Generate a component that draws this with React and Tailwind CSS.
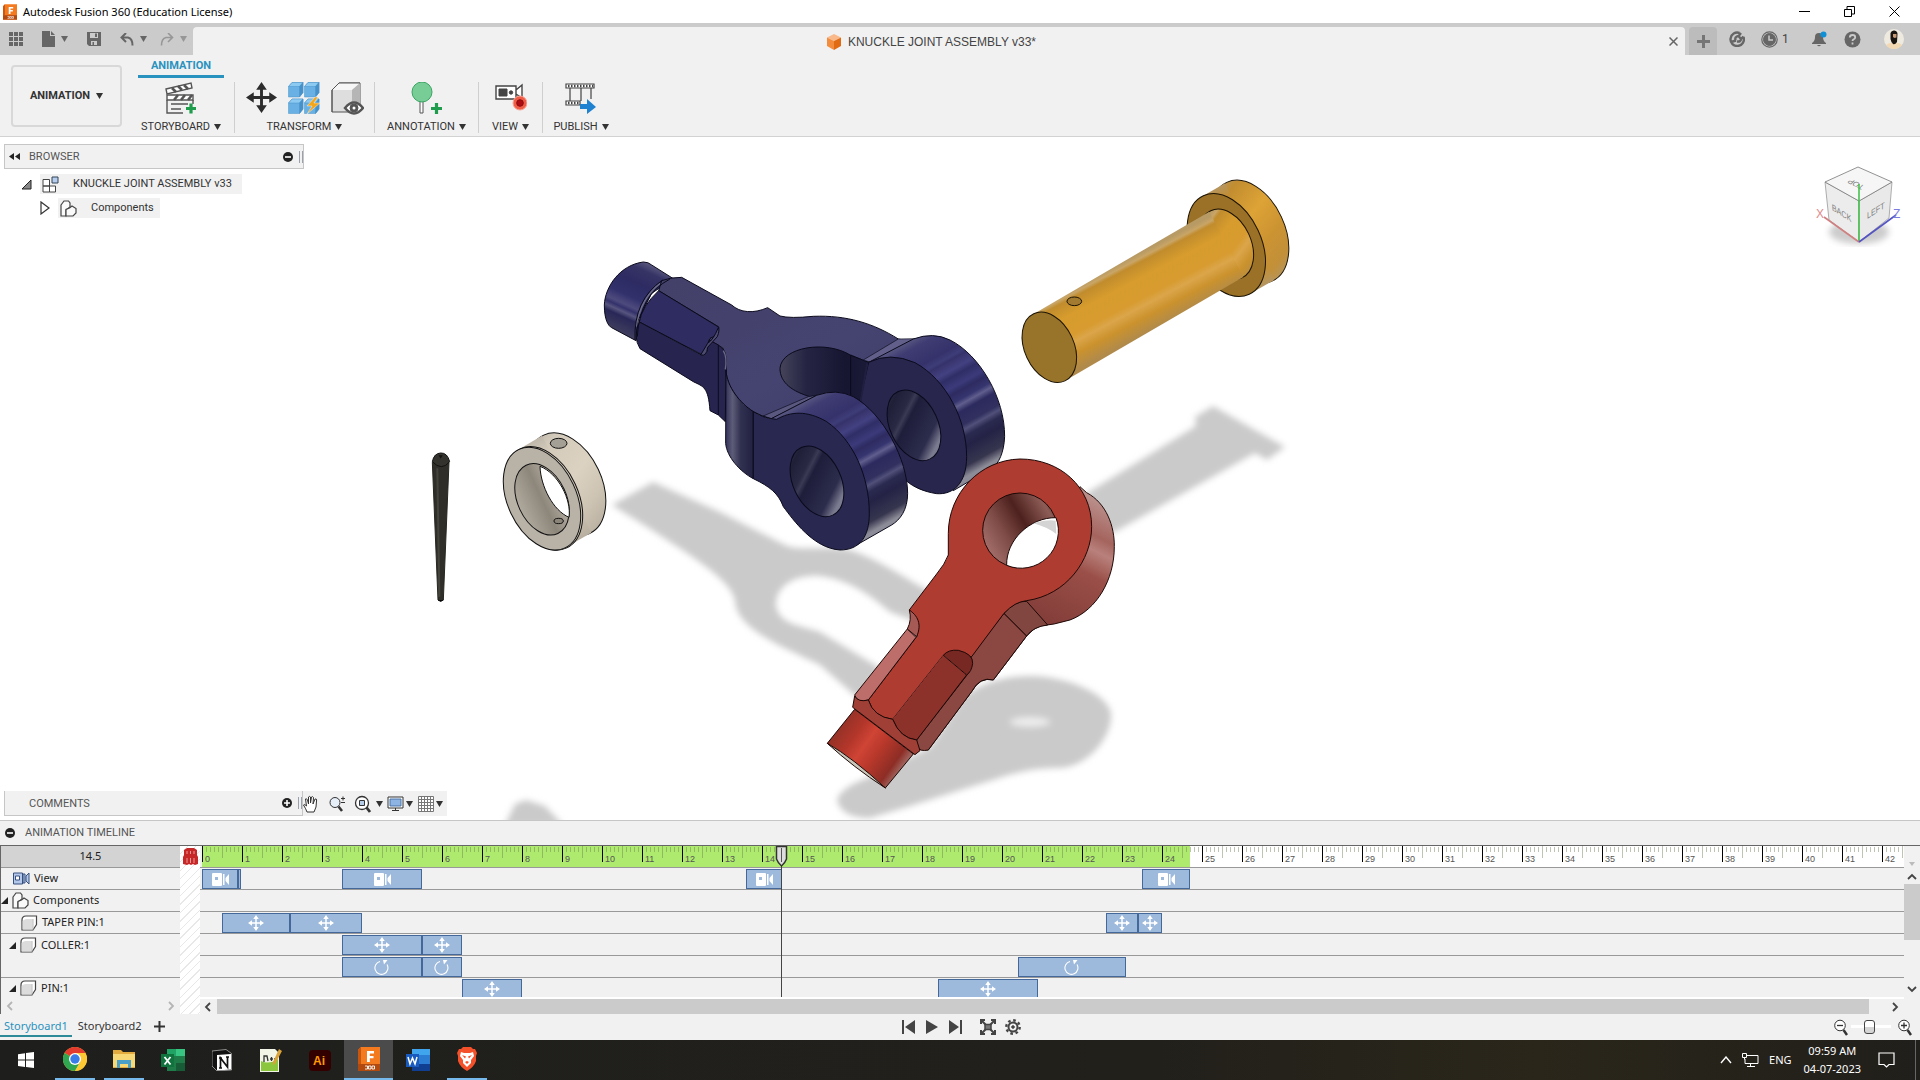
import { useState } from 'react';

const UNIT = 40;

const rows = [
    { id: 'view', clips: [[0, 0.9, 'camera'], [0.9, 0.98, ''], [3.5, 5.5, 'camera'], [13.6, 14.5, 'camera'], [23.5, 24.7, 'camera']] },
    { id: 'components', clips: [] },
    { id: 'taper', clips: [[0.5, 2.2, 'move'], [2.2, 4, 'move'], [22.6, 23.4, 'move'], [23.4, 24, 'move']] },
    { id: 'coller-move', clips: [[3.5, 5.5, 'move'], [5.5, 6.5, 'move']] },
    { id: 'coller-turn', clips: [[3.5, 5.5, 'turn'], [5.5, 6.5, 'turn'], [20.4, 23.1, 'turn']] },
    { id: 'pin', clips: [[6.5, 8, 'move'], [18.4, 20.9, 'move']] },
];

const Caret = () => (
    <svg width="7" height="6" viewBox="0 0 7 6" fill="currentColor" className="shrink-0"><path d="M0 0h7L3.500 6z" /></svg>
);

const MoveIcon = ({ size = 16, fill = '#fff' }) => (
    <svg width={size} height={size} viewBox="0 0 32 32" fill={fill}>
        <path d="M16 0l5.500 8h-4v6.500H24v-4l8 5.500-8 5.500v-4h-6.500V24h4L16 32l-5.500-8h4v-6.500H8v4L0 16l8-5.500v4h6.500V8h-4z" />
    </svg>
);

const CameraIcon = () => (
    <svg width="17" height="13" viewBox="0 0 17 13" fill="#fff">
        <path fillRule="evenodd" d="M1 0h8a1 1 0 0 1 1 1v11a1 1 0 0 1-1 1H1a1 1 0 0 1-1-1V1a1 1 0 0 1 1-1zM3 4v3h3V4z" />
        <path d="M11 1h1.500v11H11zM17 1v11l-3.500-4V5z" />
    </svg>
);

const TurnIcon = () => (
    <svg width="16" height="17" viewBox="0 0 16 17" fill="none" stroke="#fff">
        <path d="M6 2.500A6.500 6.500 0 1 0 13 5.500" strokeWidth="1.100" />
        <path d="M9 1h4.500L10 5.500z" fill="#fff" stroke="none" />
    </svg>
);

const ComponentsIcon = () => (
    <svg width="17" height="17" viewBox="0 0 17 17" fill="#fafafa" stroke="#444" strokeWidth="1.200" className="shrink-0">
        <path d="M1 5l3-4h4.500L10 3v4l-4 3v6H1z" />
        <path d="M6 16V9.500L9.500 8 12 6l4 2.500V13l-3 3z" />
    </svg>
);

const BodyIcon = () => (
    <svg width="17" height="16" viewBox="0 0 17 16" stroke="#444" strokeWidth="1.200" className="shrink-0">
        <path d="M1 5q0-4 4-4h10.500v8.500L12 15H1z" fill="#fff" />
        <path d="M1.600 6q2-2 4-2h6v10.400h-10z" fill="#dcdcdc" stroke="none" />
        <path d="M12 15V4" fill="none" stroke="#aaa" strokeWidth="0.800" />
    </svg>
);

const Expanded = () => (
    <svg width="7" height="7" viewBox="0 0 7 7" fill="#222" className="shrink-0"><path d="M7 0v7H0z" /></svg>
);

const RoundIcon = ({ plus }) => (
    <svg width="10" height="10" viewBox="0 0 10 10" className="shrink-0">
        <circle cx="5" cy="5" r="5" fill="#222" />
        <path d={plus ? 'M2 5h6M5 2v6' : 'M2 5h6'} stroke="#fff" strokeWidth="1.600" />
    </svg>
);

const Grip = () => <span className="h-3 w-1 shrink-0 border-x border-gray-400"></span>;

const FusionIcon = ({ w, h }) => (
    <svg width={w} height={h} viewBox="0 0 22 24">
        <path d="M3 0h19v24H0V3z" fill="#f47a20" />
        <path d="M0 3l3-3v17H0z" fill="#c9560e" />
        <path d="M0 17h22v7H0z" fill="#b24a10" />
        <path d="M9 4h7v2.400h-4.200V9h3.700v2.300h-3.700V15H9z" fill="#fff" />
        <path d="M7 19h2.500v3H7M10.500 19H13v3h-2.500zM14 19h2.500v3H14z" fill="none" stroke="#fff" strokeWidth="0.900" />
    </svg>
);

const TitleBar = () => (
    <header className="flex h-[23px] shrink-0 items-center bg-white pl-[3px] font-['Noto_Sans',sans-serif] text-[11px] text-black">
        <FusionIcon w="14" h="16" />
        <h1 className="ml-1.5 pt-px">Autodesk Fusion 360 (Education License)</h1>
        <div className="ml-auto mr-5 flex gap-[34px]">
            <button aria-label="Minimize">
                <svg width="11" height="11" viewBox="0 0 11 11" stroke="#000"><path d="M0 5.500h11" /></svg>
            </button>
            <button aria-label="Restore">
                <svg width="11" height="11" viewBox="0 0 11 11" stroke="#000" fill="none"><path d="M.5 3.500h7v7h-7zM3 3V.5h7.500V8H8" /></svg>
            </button>
            <button aria-label="Close">
                <svg width="11" height="11" viewBox="0 0 11 11" stroke="#000"><path d="M.5.5l10 10M10.500.5l-10 10" /></svg>
            </button>
        </div>
    </header>
);

const TabStrip = () => (
    <div className="flex h-8 shrink-0 bg-[#cbcbcb] text-[#666]">
        <div className="flex w-[193px] shrink-0 items-center pl-[9px]">
            <button aria-label="Show data panel">
                <svg width="14" height="14" viewBox="0 0 14 14" fill="#666"><path d="M0 0h4v4H0zM5 0h4v4H5zM10 0h4v4h-4zM0 5h4v4H0zM5 5h4v4H5zM10 5h4v4h-4zM0 10h4v4H0zM5 10h4v4H5zM10 10h4v4h-4z" /></svg>
            </button>
            <button aria-label="File" className="ml-[19px] flex items-center gap-1.5">
                <svg width="13" height="16" viewBox="0 0 13 16" fill="#666"><path d="M0 0h8v5h5v11H0zM9 0l4 4H9z" /></svg>
                <Caret />
            </button>
            <button aria-label="Save" className="ml-[19px]">
                <svg width="14" height="14" viewBox="0 0 14 14" fill="#666"><path fillRule="evenodd" d="M0 0h14v14H2l-2-2zM3 1v5h8V1zM4 9v4h1.500v-3H7v3h3V9zM8 1.500h2v3.500H8z" /></svg>
            </button>
            <button aria-label="Undo" className="ml-[19px] flex items-center gap-1.5">
                <svg width="14" height="13" viewBox="0 0 14 13" fill="none" stroke="#666" strokeWidth="2"><path d="M6 0L1.500 4.500 6 9M2 4.500h6q4.500 1 4.500 8" /></svg>
                <Caret />
            </button>
            <button aria-label="Redo" className="ml-[13px] flex items-center gap-1.5 text-[#979797]">
                <svg width="14" height="13" viewBox="0 0 14 13" fill="none" stroke="#979797" strokeWidth="1.600"><path d="M8 0l4.500 4.500L8 9M12 4.500H6Q1.500 5.500 1.500 12.500" /></svg>
                <Caret />
            </button>
        </div>
        <div className="mt-1 flex flex-1 items-center rounded-t bg-[#f1f1f1]">
            <div className="flex flex-1 items-center justify-center gap-1.5 pt-px font-['Liberation_Sans',sans-serif] text-xs text-[#444]">
                <svg width="16" height="16" viewBox="0 0 16 16">
                    <path d="M8 0l7 3.500-7 3.500-7-3.500z" fill="#f9b98b" />
                    <path d="M1 3.500L8 7v9l-7-4z" fill="#f48c3d" />
                    <path d="M15 3.500L8 7v9l7-4z" fill="#e06b12" />
                </svg>
                KNUCKLE JOINT ASSEMBLY v33*
            </div>
            <button aria-label="Close tab" className="mr-[7px]">
                <svg width="9" height="9" viewBox="0 0 9 9" stroke="#666" strokeWidth="1.500"><path d="M.5.5l8 8M8.500.5l-8 8" /></svg>
            </button>
        </div>
        <button aria-label="New tab" className="ml-1 mt-1 flex w-7 items-center justify-center rounded-t bg-[#bcbcbc]">
            <svg width="13" height="13" viewBox="0 0 13 13" stroke="#757575" strokeWidth="3"><path d="M0 6.500h13M6.500 0v13" /></svg>
        </button>
        <div className="flex w-[203px] items-center pl-3">
            <button aria-label="Extensions">
                <svg width="16" height="16" viewBox="0 0 16 16" fill="none" stroke="#666" strokeWidth="2.400"><path d="M10.500 2A6.700 6.700 0 1 0 14.500 6M2 11l5-1.500M6.500 9.500q-1-4 3-4.500l2.500 3q0 3-4 2.500M10 4.500L12 2M12 8l2.500-2.500" /></svg>
            </button>
            <button className="ml-4 flex items-center gap-1 font-['Roboto',sans-serif] text-xs text-[#444]">
                <svg width="17" height="17" viewBox="0 0 17 17" fill="none" stroke="#666"><circle cx="8.500" cy="8.500" r="7.700" strokeWidth="1.200" /><circle cx="8.500" cy="8.500" r="6" fill="#666" /><path d="M8 4.500V9h4" stroke="#cbcbcb" strokeWidth="1.500" /></svg>
                1
            </button>
            <button aria-label="Notifications" className="ml-[23px]">
                <svg width="15" height="16" viewBox="0 0 15 16" fill="#666"><path d="M0 12q3-2 3-6 0-4 4-4t4 4q0 4 3 6v1H0zM5 14h4q-2 2.500-4 0z" /><circle cx="11.500" cy="3.500" r="3" fill="#0f8fd6" /></svg>
            </button>
            <button aria-label="Help" className="ml-[17px]">
                <svg width="17" height="17" viewBox="0 0 17 17"><circle cx="8.500" cy="8.500" r="8" fill="#666" /><path d="M5.800 6.500q0-2.500 2.700-2.500t2.700 2.200q0 1.300-1.500 2.100-1.200.6-1.200 1.700M8.500 11.500v2" fill="none" stroke="#cbcbcb" strokeWidth="1.800" /></svg>
            </button>
            <button aria-label="Account" className="ml-[23px]">
                <svg width="20" height="20" viewBox="0 0 20 20">
                    <circle cx="10" cy="10" r="10" fill="#eeeae0" />
                    <path d="M2 16q4-3 8-2 5-1 8 2-3 4-8 4t-8-4z" fill="#f2d9b4" />
                    <path d="M6.500 4q1-3 4-2.500t3 3.500L13 13q-2 3-4 2-2-2-2.500-5z" fill="#1b1512" />
                    <path d="M9 5h3.500v3.500l-2 .5-1.500-1z" fill="#c99a76" />
                </svg>
            </button>
        </div>
    </div>
);

const ToolGroup = ({ label, className, children }) => (
    <div className={`flex flex-col items-center justify-between border-r border-[#cfcfcf] ${className}`}>
        <div className="flex gap-[11px] text-[#333]">{children}</div>
        <button className="flex items-center gap-1 whitespace-nowrap leading-3">{label} <Caret /></button>
    </div>
);

const Ribbon = () => (
    <section className="relative flex h-[82px] shrink-0 border-b border-[#d2d2d2] bg-[#f1f1f1] font-['Roboto',sans-serif] text-[11px] text-[#333] shadow-[0_2px_2px_#eee]">
        <button className="ml-[11px] mt-2.5 flex h-[62px] w-[111px] items-center justify-center gap-1.5 rounded border-2 border-[#d8d8d8] font-bold">
            ANIMATION <Caret />
        </button>
        <div className="ml-4 flex flex-col">
            <button className="flex h-[23px] w-[86px] items-center justify-center border-b-[3px] border-[#2a92bf] pt-[3px] font-bold text-[#2a92bf]">ANIMATION</button>
            <div className="mt-1 flex h-[51px]">
                <ToolGroup label="STORYBOARD" className="w-[97px] pr-2.5">
                    <svg width="32" height="32" viewBox="0 0 32 32" fill="none" stroke="#555" strokeWidth="1.400">
                        <path d="M1 7L26 1l1 5L2 12z" fill="#fff" /><path d="M7 6l4 4M13 4l4 4M19 3l4 4" strokeWidth="2.600" />
                        <path d="M2 13h26v5H2z" fill="#fff" /><path d="M9 18l4-5M16 18l4-5M23 18l4-5" strokeWidth="2.600" />
                        <path d="M2 18v13h16M28 18v4M6 22h17M6 27h10M2 31h16" />
                        <path d="M21 26.500h10M26 21.500v10" stroke="#1f9d4c" strokeWidth="3.200" />
                    </svg>
                </ToolGroup>
                <ToolGroup label="TRANSFORM" className="w-[140px]">
                    <MoveIcon size={31} fill="#2c2c2c" />
                    <svg width="32" height="32" viewBox="0 0 32 32" stroke="#4a93c8" strokeWidth="0.500">
                        <g id="cube"><path d="M0.500 4.500L4 .5h11v10L11.500 15H.5z" fill="#69b1e4" /><path d="M.5 4.500L4 .5h11l-3.500 4z" fill="#8ccaf2" /><path d="M11.500 4.500L15 .5v10L11.500 15z" fill="#4592cb" /></g>
                        <use href="#cube" x="16" /><use href="#cube" y="16.500" /><use href="#cube" x="16" y="16.500" />
                        <path d="M27 15l-8 9h5l-5 8 13-11h-6l4-6z" fill="#f5a71c" stroke="#f1f1f1" />
                    </svg>
                    <svg width="33" height="33" viewBox="0 0 33 33" stroke="#555">
                        <path d="M1 8l7-7h21v21l-8 8H1z" fill="#dedede" /><path d="M1 8l7-7h21l-8 7z" fill="#f6f6f6" stroke="none" /><path d="M21 8l8-7v21l-8 8z" fill="#b5b5b5" stroke="none" />
                        <path d="M1 30V8l7-7h21" fill="none" />
                        <path d="M14 26q9-11 18 0-9 11-18 0z" fill="#fff" strokeWidth="2.500" stroke="#555" /><circle cx="23" cy="26" r="4" fill="#555" /><circle cx="23" cy="26" r="1.500" fill="#fff" stroke="none" />
                    </svg>
                </ToolGroup>
                <ToolGroup label="ANNOTATION" className="w-[104px]">
                    <svg width="32" height="32" viewBox="0 0 32 32">
                        <path d="M9 19h3v12H9z" fill="#fff" stroke="#555" /><ellipse cx="11" cy="10" rx="10" ry="10" fill="#78cd97" stroke="#3aa564" />
                        <path d="M20 26.500h11M25.500 21v11" stroke="#1f9d4c" strokeWidth="3.200" />
                    </svg>
                </ToolGroup>
                <ToolGroup label="VIEW" className="w-16">
                    <svg width="32" height="32" viewBox="0 0 32 32" fill="none" stroke="#444">
                        <path d="M1 4h20v13H1zM21 8l6-5v13l-6-4" fill="#fff" strokeWidth="1.400" /><path d="M4 7h8v7H4z" fill="#444" /><circle cx="16" cy="10.500" r="1.700" fill="#444" />
                        <circle cx="25" cy="21" r="7" fill="#f05c46" stroke="#f8a497" /><circle cx="25" cy="21" r="3.300" fill="#ad0d12" stroke="#8c0b10" />
                    </svg>
                </ToolGroup>
                <div className="flex w-[76px] flex-col items-center justify-between">
                    <svg width="32" height="32" viewBox="0 0 32 32" fill="none" stroke="#444" strokeWidth="1.200">
                        <path d="M1 2h28v4H1zM1 19h14v4H1zM5 6v13M16 6v13M26 6v11" fill="#fff" />
                        <path d="M3 4h25M3 21h11" strokeWidth="2.500" strokeDasharray="1.500 1.500" />
                        <path d="M15 22h7v-5l9 8-9 7v-5h-7z" fill="#1f82d0" stroke="none" />
                    </svg>
                    <button className="flex items-center gap-1 leading-3">PUBLISH <Caret /></button>
                </div>
            </div>
        </div>
    </section>
);

const Scene = () => (
    <svg className="absolute inset-0 h-full w-full" viewBox="0 137 1920 683" preserveAspectRatio="xMidYMid slice" aria-label="Exploded knuckle joint">
        <defs>
            <filter id="soft"><feGaussianBlur stdDeviation="3" /></filter>
            <linearGradient id="rim1" gradientUnits="userSpaceOnUse" x1="620" y1="480" x2="850" y2="890">
                <stop offset="0" stopColor="#b0b0bd" /><stop offset=".05" stopColor="#5d5b83" /><stop offset=".12" stopColor="#3e3c72" /><stop offset=".24" stopColor="#35326b" /><stop offset=".28" stopColor="#3f3d79" />
                <stop offset=".3" stopColor="#35326a" /><stop offset=".36" stopColor="#444182" /><stop offset=".4" stopColor="#302e66" /><stop offset=".46" stopColor="#3c3a7a" /><stop offset=".5" stopColor="#2d2b60" /><stop offset=".55" stopColor="#37356f" />
                <stop offset=".58" stopColor="#5f5e8d" /><stop offset=".62" stopColor="#2c2a5e" /><stop offset=".7" stopColor="#31305f" /><stop offset=".73" stopColor="#50507a" /><stop offset=".77" stopColor="#2a294f" /><stop offset=".83" stopColor="#242346" /><stop offset=".94" stopColor="#37364f" /><stop offset="1" stopColor="#8c8c98" />
            </linearGradient>
            <linearGradient id="rim2" href="#rim1" gradientTransform="translate(292 -170)" />
            <linearGradient id="shank" gradientUnits="userSpaceOnUse" x1="200" y1="65" x2="105" y2="275">
                <stop offset="0" stopColor="#5d5b80" /><stop offset=".12" stopColor="#363465" /><stop offset=".3" stopColor="#2d2b62" /><stop offset=".5" stopColor="#33316c" /><stop offset=".62" stopColor="#4d4b7d" /><stop offset=".67" stopColor="#33316a" /><stop offset=".72" stopColor="#57557f" /><stop offset=".78" stopColor="#292757" /><stop offset="1" stopColor="#41405e" />
            </linearGradient>
            <linearGradient id="top" x1="0" y1="0" x2="1" y2="1"><stop offset="0" stopColor="#434169" /><stop offset=".6" stopColor="#454370" /><stop offset="1" stopColor="#3e3c68" /></linearGradient>
            <linearGradient id="arm"><stop offset="0" stopColor="#34335a" /><stop offset=".25" stopColor="#5d5c78" /><stop offset=".55" stopColor="#30304f" /><stop offset="1" stopColor="#222143" /></linearGradient>
            <linearGradient id="bore" x1="0" y1="0" x2=".5" y2="1"><stop offset="0" stopColor="#3b3a54" /><stop offset=".2" stopColor="#1f1f38" /><stop offset=".38" stopColor="#292944" /><stop offset=".43" stopColor="#3b3a54" /><stop offset=".5" stopColor="#1e1e3b" /><stop offset=".85" stopColor="#2c2c4c" /><stop offset="1" stopColor="#7b7b90" /></linearGradient>
            <linearGradient id="slot"><stop offset="0" stopColor="#45445a" /><stop offset=".2" stopColor="#252443" /><stop offset=".5" stopColor="#171631" /><stop offset="1" stopColor="#202043" /></linearGradient>
            <linearGradient id="gold" gradientUnits="userSpaceOnUse" x1="362" y1="310" x2="465" y2="506">
                <stop offset="0" stopColor="#b79a64" /><stop offset=".06" stopColor="#c9a566" /><stop offset=".11" stopColor="#c18c2d" /><stop offset=".3" stopColor="#d79c2d" /><stop offset=".55" stopColor="#d79b2f" /><stop offset=".65" stopColor="#dba54a" /><stop offset=".8" stopColor="#cb922d" /><stop offset="1" stopColor="#b08a4b" />
            </linearGradient>
            <linearGradient id="gold2" gradientUnits="userSpaceOnUse" x1="640" y1="85" x2="790" y2="390"><stop offset="0" stopColor="#b59663" /><stop offset=".12" stopColor="#c28d30" /><stop offset=".4" stopColor="#dda336" /><stop offset=".65" stopColor="#cc9332" /><stop offset=".85" stopColor="#c29039" /><stop offset="1" stopColor="#b0976c" /></linearGradient>
            <linearGradient id="redside" gradientUnits="userSpaceOnUse" x1="840" y1="200" x2="640" y2="600"><stop offset="0" stopColor="#bd9591" /><stop offset=".25" stopColor="#a5645e" /><stop offset=".34" stopColor="#b9817c" /><stop offset=".5" stopColor="#9a4f48" /><stop offset="1" stopColor="#7f3a36" /></linearGradient>
            <linearGradient id="redbore" x1="0" y1=".6" x2="1" y2="0"><stop offset="0" stopColor="#a06b66" /><stop offset=".25" stopColor="#7d4a45" /><stop offset=".5" stopColor="#4d211e" /><stop offset=".8" stopColor="#8d5c56" /><stop offset="1" stopColor="#452320" /></linearGradient>
            <linearGradient id="redend" gradientUnits="userSpaceOnUse" x1="50" y1="890" x2="245" y2="1030"><stop offset="0" stopColor="#913127" /><stop offset=".25" stopColor="#b3362a" /><stop offset=".42" stopColor="#cf4435" /><stop offset=".6" stopColor="#b8382b" /><stop offset=".85" stopColor="#8d2d25" /><stop offset="1" stopColor="#a67771" /></linearGradient>
            <linearGradient id="ring" gradientUnits="userSpaceOnUse" x1="330" y1="120" x2="490" y2="425"><stop offset="0" stopColor="#bcb5a8" /><stop offset=".15" stopColor="#d3cabb" /><stop offset=".5" stopColor="#dcd2c1" /><stop offset=".75" stopColor="#cdc4b4" /><stop offset="1" stopColor="#b5ac9d" /></linearGradient>
            <linearGradient id="ringbore"><stop offset="0" stopColor="#b0a99e" /><stop offset=".5" stopColor="#8d867b" /><stop offset="1" stopColor="#c1b9ac" /></linearGradient>
        </defs>

        {/* ground shadows */}
        <g fill="#cacaca" filter="url(#soft)">
            <path d="M612 505L653 482 720 512 785 545C800 552 830 545 850 550 880 560 905 578 930 592L925 625 890 612C870 595 850 580 820 576 790 574 775 590 776 606 780 625 800 625 820 632L880 668 860 700 820 665C790 650 735 630 735 600 730 580 700 560 612 505z" />
            <path d="M1195 417L1213 406 1285 447 1267 460 1255 453 1113 533 1080 515 1087 493 1196 426z" />
            <path d="M837 800C840 790 853 783 870 777L930 747 963 697C980 683 1007 675 1033 676 1067 677 1107 693 1111 713 1113 737 1087 767 1060 768 1033 767 1007 775 993 780L967 788 907 807 870 818C853 818 840 813 837 800z" />
            <path d="M505 825L515 804 526 800 545 806 563 825z" />
            <ellipse cx="1030" cy="722" rx="20" ry="5" fill="#ececec" />
        </g>

        {/* taper pin and collar */}
        <g transform="translate(420 400) scale(.3333)" stroke="#111" strokeWidth="3">
            <path d="M37 187L54 600q8 6 16 0L87 187z" fill="#2f2e29" stroke="#26251f" />
            <path d="M52 205L58 590" stroke="#45443c" strokeWidth="6" fill="none" />
            <path d="M37 185Q42 160 62 159t27 26q-24 30-52 0z" fill="#34322c" />
            <path d="M56 166h12l-6 10z" fill="#111" stroke="none" /><path d="M54 600q8 8 16 0" />
            <ellipse cx="440" cy="253" rx="105" ry="163" transform="rotate(-25 440 253)" fill="url(#ring)" />
            <path d="M293 150L366 107 514 398 441 440z" fill="url(#ring)" stroke="none" />
            <ellipse cx="371" cy="295" rx="104" ry="164" transform="rotate(-25 371 295)" fill="#cfc7b8" />
            <ellipse cx="366" cy="296" rx="103" ry="163" transform="rotate(-25 366 296)" fill="#b8b2a7" />
            <ellipse cx="366" cy="298" rx="73" ry="113" transform="rotate(-25 366 298)" fill="url(#ringbore)" />
            <path d="M360 199C362 260 400 332 447 352 455 300 415 220 360 199z" fill="#fff" />
            <ellipse cx="416" cy="130" rx="25" ry="15" fill="#a5a096" /><ellipse cx="416" cy="363" rx="14" ry="8" fill="#8a8479" />
        </g>

        {/* fork */}
        <g transform="translate(580 240) scale(.3333)" stroke="#0b0a1c" strokeWidth="3" strokeLinejoin="round">
            <path d="M190 66C120 75 75 140 73 195 73 240 85 258 95 263L168 302 175 240 215 160 280 116 215 75Q205 66 190 66z" fill="url(#shank)" />
            <path d="M305 112L455 195C480 218 520 222 563 203L600 228Q630 236 700 229C800 225 880 250 955 297L985 303 860 367Q845 358 812 345L812 465 690 470 575 535Q545 530 520 515C480 490 440 440 438 390L430 325 388 300 415 260 236 152 245 122Q270 112 305 112z" fill="url(#top)" />
            <path d="M236 152L417 262 412 285 390 295 368 345 178 246Q185 200 236 152z" fill="#2e2c60" />
            <path d="M178 246L368 347 380 335 388 300 415 315 430 328Q442 345 438 390L436 545 415 525 390 512C385 440 370 440 340 425L180 326Q158 290 178 246z" fill="#27254f" />
            <path d="M415 263Q400 300 383 310L362 345Q380 350 383 322L412 290Q420 270 415 263z" fill="#4d4b70" />
            <path d="M415 315V525" fill="none" /><path d="M430 332q12 20 6 56" fill="none" stroke="#6b6a86" strokeWidth="4" />
            <path d="M240 130Q182 175 168 260" fill="none" stroke="#6d6d88" strokeWidth="5" /><path d="M248 120Q160 180 165 300M270 117Q178 165 172 290" fill="none" />
            <path d="M600 385C605 320 740 300 812 346L866 367Q900 350 935 350L990 600 940 570 770 460 690 470C640 455 600 430 600 385z" fill="url(#slot)" />
            <path d="M812 346V465" fill="none" />
            <path d="M955 297L850 360 872 367 1005 296z" fill="#62608a" strokeWidth="2" />
            <path d="M868 366L1000 297Q1060 275 1110 300C1200 345 1275 475 1274 590 1272 640 1255 670 1240 682L1120 752 1060 500z" fill="url(#rim2)" />
            <path d="M866 367Q930 335 1005 368C1100 420 1160 540 1160 650 1160 730 1120 765 1070 761 1030 755 1000 740 982 725L880 620 840 480z" fill="#28264d" />
            <path d="M862 370L842 480 890 640" stroke="#211f40" strokeWidth="6" fill="none" />
            <ellipse cx="1002" cy="556" rx="72" ry="112" transform="rotate(-25 1002 556)" fill="url(#bore)" />
            <path d="M438 390C440 440 480 490 520 515V716C480 695 440 650 437 610z" fill="url(#arm)" />
            <path d="M685 470L550 528 575 536 710 466z" fill="#5a587f" strokeWidth="2" />
            <path d="M572 537L710 466Q770 445 820 470C910 520 983 660 983 760 983 810 960 840 935 855L830 915 760 700z" fill="url(#rim1)" />
            <path d="M520 515Q550 535 590 538C630 515 680 510 740 545 820 600 868 710 868 820 868 890 840 930 780 930 700 925 640 840 610 800 595 760 570 740 520 716z" fill="#292850" />
            <ellipse cx="711" cy="724" rx="72" ry="112" transform="rotate(-25 711 724)" fill="url(#bore)" />
        </g>

        {/* pin */}
        <g transform="translate(1000 160) scale(.3333)" stroke="#1c1303" strokeWidth="3">
            <ellipse cx="749" cy="215" rx="105" ry="163" transform="rotate(-25 749 215)" fill="url(#gold2)" />
            <path d="M605 110L675 70 823 360 753 400z" fill="url(#gold2)" stroke="none" />
            <ellipse cx="679" cy="255" rx="105" ry="163" transform="rotate(-25 679 255)" fill="#9a7126" />
            <ellipse cx="679" cy="253" rx="74" ry="111" transform="rotate(-25 679 253)" fill="url(#gold)" />
            <path d="M97 464L628 155 730 351 199 660z" fill="url(#gold)" stroke="none" />
            <ellipse cx="148" cy="562" rx="74" ry="111" transform="rotate(-25 148 562)" fill="#98732a" />
            <ellipse cx="223" cy="424" rx="22" ry="13" fill="#a27a30" />
        </g>

        {/* eye */}
        <g transform="translate(820 430) scale(.3333)" stroke="#1d0806" strokeWidth="3" strokeLinejoin="round">
            <path d="M780 170L800 188C860 220 884 290 883 350 883 450 830 540 750 570Q700 585 660 588 640 595 620 618L520 750Q480 740 455 785L325 960 290 955 445 720 552 550 620 512z" fill="url(#redside)" />
            <path d="M290 930L445 730 455 675 552 550 620 618 520 750Q480 738 455 785L325 960Q300 966 290 950z" fill="#8b4842" />
            <path d="M552 550Q585 512 620 514L683 585Q640 590 620 618z" fill="#824640" />
            <path d="M600 87C480 90 385 190 385 310V375Q375 402 350 432L268 540Q305 575 290 620L145 810Q160 862 218 868L370 676 455 680 552 550Q585 515 620 512C740 495 815 390 815 290 815 170 720 87 600 87z" fill="#ae3c31" />
            <circle cx="600" cy="301" r="112" fill="url(#redbore)" />
            <path d="M708 263C630 262 558 330 560 406A112 112 0 0 0 708 263z" fill="#fff" />
            <path d="M640 280q40-12 67-8l2 40q-30-22-69-32z" fill="#d4d4d4" stroke="none" />
            <path d="M262 597L288 622 145 810Q110 820 104 795z" fill="#bd6d6a" />
            <path d="M268 540C300 562 303 590 290 620L262 597Q276 570 268 540z" fill="#a65a55" />
            <path d="M370 676L218 868Q240 925 290 930L440 735z" fill="#8d312b" stroke="none" />
            <path d="M218 868Q240 925 290 930L440 735" fill="none" />
            <path d="M370 676Q385 658 415 661 460 672 458 700 455 725 440 735z" fill="#782822" />
            <path d="M104 798L98 832 285 974 300 962 290 930Q240 925 218 868 160 860 145 810 115 818 104 798z" fill="#a03f35" />
            <path d="M104 838L22 940 196 1074 280 972z" fill="url(#redend)" />
            <path d="M22 940Q100 1012 196 1074 100 985 22 940z" fill="#c9c6ba" />
        </g>
    </svg>
);

const ViewCube = () => (
    <svg width="90" height="90" viewBox="1814 160 90 90" className="absolute right-4 top-[23px]" aria-label="View cube">
        <ellipse cx="1859" cy="232" rx="30" ry="12" fill="#ccc" filter="url(#soft)" />
        <path d="M1825 182L1859 201V242L1829 220z" fill="#ececec" stroke="#999" strokeWidth=".8" />
        <path d="M1892 182L1859 201V242L1889 218z" fill="#e9e9e9" stroke="#999" strokeWidth=".8" />
        <path d="M1858 167L1892 182 1859 201 1825 182z" fill="#f6f6f6" stroke="#777" strokeWidth=".8" />
        <g fill="#808080" className="font-['Liberation_Sans',sans-serif] text-[9px]">
            <text transform="matrix(.8 .5 .05 1 1832 210)">BACK</text>
            <text transform="matrix(.8 -.5 0 1 1867 219)">LEFT</text>
            <text transform="matrix(-.8 -.4 .6 -.6 1865 186)">TOP</text>
        </g>
        <path d="M1859 242V184" stroke="#46c24d" strokeWidth="1.600" />
        <path d="M1859 242L1824 217" stroke="#d08080" strokeWidth="1.600" />
        <path d="M1859 242L1896 215" stroke="#5353c4" strokeWidth="1.600" />
        <text x="1816" y="218" fill="#e08a8a" className="font-['Liberation_Sans',sans-serif] text-xs">X</text>
        <text x="1893" y="218" fill="#7d7de0" className="font-['Liberation_Sans',sans-serif] text-xs">Z</text>
    </svg>
);

const Canvas = () => (
    <main className="relative flex min-h-0 flex-1 flex-col justify-between overflow-hidden bg-white pl-1 font-['Roboto',sans-serif] text-[11px] text-[#333]">
        <Scene />
        <ViewCube />
        <aside className="relative mt-[7px] w-[300px]">
            <div className="flex h-[25px] items-center border border-[#c6c6c6] bg-[#f1f1f1] pl-1 text-[#555]">
                <svg width="11" height="7" viewBox="0 0 11 7" fill="#222"><path d="M5 0v7L0 3.500zM11 0v7L6 3.500z" /></svg>
                <h2 className="ml-[9px] pt-0.5">BROWSER</h2>
                <button aria-label="Collapse browser" className="ml-auto mr-1.5"><RoundIcon /></button>
                <Grip />
            </div>
            <div className="mt-[5px] flex h-5 items-center pl-[17px]">
                <svg width="11" height="11" viewBox="0 0 11 11" className="mr-2"><path d="M10 1v9H1z" fill="#888" stroke="#222" /></svg>
                <div className="flex h-5 items-center bg-[#f1f1f1] pr-2.5 pt-px">
                    <svg width="17" height="17" viewBox="0 0 17 17" fill="#fff" stroke="#444" className="ml-0.5 mr-3.5"><path d="M1 3.500h6.500V10H1zM1 10h6.500v6H1zM7.500 10h6v6h-6z" /><path d="M10 1h6v6h-6z" fill="#b7cdf0" stroke="#345" /></svg>
                    KNUCKLE JOINT ASSEMBLY v33
                </div>
            </div>
            <div className="mt-1 flex h-5 items-center pl-9">
                <svg width="10" height="14" viewBox="0 0 10 14" className="mr-2"><path d="M1 1l8 6-8 6z" fill="#fff" stroke="#333" strokeWidth="1.200" /></svg>
                <div className="flex h-5 items-center gap-3.5 bg-[#f1f1f1] pl-0.5 pr-1.5 pt-px"><ComponentsIcon /> Components</div>
            </div>
        </aside>
        <div className="relative mb-1 flex h-[25px]">
            <div className="flex w-[299px] items-center border border-t-0 border-[#c6c6c6] bg-[#f1f1f1] pl-6 text-[#555]">
                <h2 className="pt-0.5">COMMENTS</h2>
                <button aria-label="Show comments" className="ml-auto mr-1.5"><RoundIcon plus /></button>
                <Grip />
            </div>
            <div className="flex w-36 items-center bg-[#f1f1f1]">
                <button aria-label="Pan">
                    <svg width="16" height="18" viewBox="0 0 16 18" fill="#fff" stroke="#333"><path d="M4 17q-1-3-3.500-7 1-1.500 3 1L2.500 4q1-1 2 1l1 4V2q1.200-1.200 2 0v6l1-6q1.200-1 2 .5L10 9l2-5q1.500-.5 1.600 1L13 12l-2 5z" /></svg>
                </button>
                <button aria-label="Zoom" className="ml-2.5">
                    <svg width="17" height="17" viewBox="0 0 17 17" fill="none" stroke="#333"><circle cx="6" cy="7.500" r="5" fill="#e6eef8" /><path d="M9.500 11.500L13 16" strokeWidth="2.500" /><path d="M12 3.500h4M14 1.500v4M12 7.500h4" /></svg>
                </button>
                <button aria-label="Fit" className="ml-2 flex items-center gap-1">
                    <svg width="18" height="18" viewBox="0 0 18 18" fill="none" stroke="#333"><circle cx="8" cy="8" r="6.500" fill="#fff" strokeWidth="1.300" /><path d="M5.500 5.500h5v5h-5z" fill="#b5cce8" /><path d="M12.500 12.500L16 17" strokeWidth="2.800" /></svg>
                    <Caret />
                </button>
                <button aria-label="Display settings" className="ml-1 flex items-center gap-0.5">
                    <svg width="17" height="16" viewBox="0 0 17 16" fill="#fff" stroke="#333"><path d="M1 1h15v11H1zM5 14.500h7M8.500 12v3" /><path d="M3 3h11v7H3z" fill="#8eb4e3" stroke="#4973a8" /></svg>
                    <Caret />
                </button>
                <button aria-label="Grid settings" className="ml-[5px] flex items-center gap-0.5">
                    <svg width="16" height="16" viewBox="0 0 16 16" fill="#fff" stroke="#777"><path d="M.5.5h15v15H.5zM.5 3.500h15M.5 6.500h15M.5 9.500h15M.5 12.500h15M3.500.5v15M6.500.5v15M9.500.5v15M12.500.5v15" /></svg>
                    <Caret />
                </button>
            </div>
        </div>
    </main>
);

const Clip = ({ start, end, kind }) => (
    <div className="absolute top-px flex h-5 items-center justify-center border border-[#44689a] bg-[#9db9dc]" style={{ left: start * UNIT + 2, width: (end - start) * UNIT }}>
        {kind === 'camera' && <CameraIcon />}
        {kind === 'move' && <MoveIcon />}
        {kind === 'turn' && <TurnIcon />}
    </div>
);

const Chevron = ({ d, color = '#444' }) => (
    <svg width="10" height="10" viewBox="0 0 10 10" fill="none" stroke={color} strokeWidth="1.800" className="shrink-0"><path d={d} /></svg>
);

const Timeline = () => {
    const marks = Array.from({ length: 43 }, (_, i) => i);

    return (
        <section className="shrink-0 border-t border-[#c6c6c6] bg-[#f1f1f1]">
            <div className="flex h-6 items-center gap-2.5 pl-[5px] font-['Roboto',sans-serif] text-[11px] text-[#555]">
                <button aria-label="Collapse timeline" className="flex"><RoundIcon /></button>
                <h2>ANIMATION TIMELINE</h2>
            </div>
            <div className="flex h-[169px] border-t border-[#666] font-['Noto_Sans',sans-serif] text-[11px] text-[#222]">
                <div className="flex w-[180px] shrink-0 flex-col border-l border-[#666]">
                    <div className="flex h-[22px] shrink-0 items-center justify-center border-b border-[#999] bg-[#d3d3d3]">14.5</div>
                    <div className="flex h-[22px] shrink-0 items-center gap-1 border-b border-[#999] pl-3">
                        <svg width="17" height="13" viewBox="0 0 17 13" fill="#b4c8ec" stroke="#36507f"><path d="M.5 1h9v11h-9z" /><path d="M2.500 4h4v4h-4z" fill="#fff" /><path d="M10 2h2v9h-2zM16 1v11l-3-3V4z" /></svg>
                        View
                    </div>
                    <div className="flex h-[22px] shrink-0 items-center gap-1 border-b border-[#999]">
                        <Expanded /> <ComponentsIcon /> Components
                    </div>
                    <div className="flex h-[22px] shrink-0 items-center gap-1 border-b border-[#999] pl-5">
                        <BodyIcon /> TAPER PIN:1
                    </div>
                    <div className="flex h-11 shrink-0 items-start border-b border-[#999] pl-2">
                        <div className="flex h-[22px] items-center gap-1"><Expanded /><BodyIcon /> COLLER:1</div>
                    </div>
                    <div className="flex h-5 shrink-0 items-center gap-1 pl-2">
                        <Expanded /><BodyIcon /> PIN:1
                    </div>
                    <div className="flex flex-1 items-center justify-between px-1">
                        <Chevron d="M7 1L3 5l4 4" color="#b5b5b5" /><Chevron d="M3 1l4 4-4 4" color="#b5b5b5" />
                    </div>
                </div>
                <div className="flex w-5 shrink-0 flex-col items-center bg-[repeating-linear-gradient(135deg,#fff_0px,#fff_5px,#e8e8e8_5px,#e8e8e8_6px)] pt-0.5">
                    <svg width="15" height="17" viewBox="0 0 15 17"><path d="M1 2l3-2h7l3 2v5l1 2v7l-3 1-2-1-2 1-2-1-2 1-4-1V9l1-2z" fill="#c62828" /><path d="M4 3v3M7.500 3v3M11 3v3M4 10v5M7.500 10v5M11 10v5" stroke="#f09a9a" /></svg>
                </div>
                <div className="flex min-w-0 flex-1 flex-col">
                    <div className="relative flex-1 overflow-hidden">
                        <div className="flex h-[22px] overflow-hidden border-b border-[#999] bg-[linear-gradient(90deg,#f1f1f1_2px,#aeea6e_2px,#aeea6e_990px,#fff_990px)] pl-0.5">
                            {marks.map(n => (
                                <div key={n} className="relative h-4 w-10 shrink-0 border-l border-black pl-0.5 pt-1 font-['Liberation_Sans',sans-serif] text-[9px] leading-[18px] text-[#555]">
                                    <svg width="40" height="12" className="absolute -left-px top-0" stroke="#6b7f55" strokeOpacity=".45">
                                        <path d="M4.500 1v5M8.500 1v5M12.500 1v5M16.500 1v5M20.500 0v12M24.500 1v5M28.500 1v5M32.500 1v5M36.500 1v5" />
                                    </svg>
                                    <span className="relative">{n}</span>
                                </div>
                            ))}
                        </div>
                        {rows.map(row => (
                            <div key={row.id} className="relative h-[22px] border-b border-[#999]">
                                {row.clips.map(([start, end, kind]) => <Clip key={start} start={start} end={end} kind={kind} />)}
                            </div>
                        ))}
                        <svg width="14" height="152" viewBox="0 0 14 152" className="absolute left-[575px] top-0">
                            <path d="M6.500 18v134" stroke="#444" />
                            <path d="M1.500 .5h10V13Q10 17 6.500 20 3 17 1.500 13z" fill="#ddd" stroke="#333" strokeWidth="1.500" /><path d="M6.500 2v14" stroke="#555" />
                        </svg>
                    </div>
                    <div className="flex h-[17px] shrink-0 items-center border-t-2 border-white pl-[3px]">
                        <Chevron d="M7 1L3 5l4 4" />
                        <div className="ml-1 mr-[21px] h-full flex-1 bg-[#cbcbcb]"></div>
                        <Chevron d="M3 1l4 4-4 4" />
                        <span className="w-1"></span>
                    </div>
                </div>
                <div className="flex w-4 shrink-0 flex-col items-center pb-5 pt-4">
                    <svg width="6" height="4" viewBox="0 0 6 4" fill="#bbb"><path d="M0 0h6L3 4z" /></svg>
                    <span className="mb-0.5 mt-1.5 flex"><Chevron d="M1 7l4-4 4 4" /></span>
                    <div className="h-14 w-full bg-[#cbcbcb]"></div>
                    <span className="mt-auto flex"><Chevron d="M1 3l4 4 4-4" /></span>
                </div>
            </div>
        </section>
    );
};

const Magnifier = ({ plus }) => (
    <svg width="14" height="17" viewBox="0 0 14 17" fill="none" stroke="#333"><circle cx="6" cy="6.500" r="5.300" fill="#fff" /><path d="M9.500 11L13 16" strokeWidth="2.500" /><path d={plus ? 'M3 6.500h6M6 3.500v6' : 'M3 6.500h6'} strokeWidth="1.300" /></svg>
);

const Playback = () => {
    const [active, setActive] = useState(1);

    return (
        <div className="grid h-[26px] shrink-0 grid-cols-3 bg-[#f1f1f1] font-['Noto_Sans',sans-serif] text-[11px] text-[#333]">
            <div className="flex items-stretch pb-[3px]">
                {[1, 2].map(n => (
                    <button key={n} onClick={() => setActive(n)} className={active === n ? 'border-b-2 border-[#2d8a98] px-1 pt-[3px] text-[#2a92bf]' : 'border-b-2 border-transparent px-1.5 pt-[3px]'}>
                        Storyboard{n}
                    </button>
                ))}
                <button aria-label="New storyboard" className="ml-1.5 pt-0.5">
                    <svg width="11" height="11" viewBox="0 0 11 11" stroke="#333" strokeWidth="2"><path d="M0 5.500h11M5.500 0v11" /></svg>
                </button>
            </div>
            <div className="flex items-center justify-center gap-[11px] pl-0.5">
                <button aria-label="To start"><svg width="13" height="14" viewBox="0 0 13 14" fill="#444"><path d="M0 0h2v14H0zM13 0v14L3 7z" /></svg></button>
                <button aria-label="Play"><svg width="12" height="14" viewBox="0 0 12 14" fill="#444"><path d="M0 0l12 7-12 7z" /></svg></button>
                <button aria-label="To end"><svg width="13" height="14" viewBox="0 0 13 14" fill="#444"><path d="M0 0l10 7-10 7zM11 0h2v14h-2z" /></svg></button>
                <button aria-label="Expand" className="ml-[7px]">
                    <svg width="16" height="16" viewBox="0 0 16 16" fill="none" stroke="#444"><path d="M1 5V1h4M11 1h4v4M15 11v4h-4M5 15H1v-4" strokeWidth="2" /><path d="M2 2l4 4M14 2l-4 4M2 14l4-4M14 14l-4-4" strokeWidth="2" /><path d="M5 5.500h6v5H5z" fill="#777" strokeWidth="1.500" /></svg>
                </button>
                <button aria-label="Settings" className="-ml-0.5">
                    <svg width="16" height="16" viewBox="0 0 16 16" fill="none" stroke="#444"><circle cx="8" cy="8" r="4.500" strokeWidth="2" /><circle cx="8" cy="8" r="6.700" strokeWidth="2.400" strokeDasharray="2.600 2.660" /><circle cx="8" cy="8" r="1.300" fill="#444" /></svg>
                </button>
            </div>
            <div className="flex items-center justify-end gap-[3px] pr-2">
                <button aria-label="Zoom out"><Magnifier /></button>
                <input type="range" aria-label="Timeline zoom" defaultValue="45" className="h-4 w-10 appearance-none bg-[linear-gradient(#f1f1f1_6px,#fff_6px,#fff_9px,#f1f1f1_9px)] [&::-webkit-slider-thumb]:h-3.5 [&::-webkit-slider-thumb]:w-[11px] [&::-webkit-slider-thumb]:appearance-none [&::-webkit-slider-thumb]:rounded-[3px] [&::-webkit-slider-thumb]:border [&::-webkit-slider-thumb]:border-solid [&::-webkit-slider-thumb]:border-[#444] [&::-webkit-slider-thumb]:bg-[linear-gradient(#fff_50%,#d5d5d5_50%)]" />
                <button aria-label="Zoom in" className="ml-1"><Magnifier plus /></button>
            </div>
        </div>
    );
};

const Task = ({ label, open, current, children }) => (
    <button aria-label={label} className={current ? 'flex h-10 w-[49px] flex-col items-center bg-[#4b4b4b]' : 'flex h-10 w-[49px] flex-col items-center'}>
        <span className="flex flex-1 items-center">{children}</span>
        {open && <span className={current ? 'h-0.5 w-full bg-[#76b9ed]' : 'h-0.5 w-10 bg-[#76b9ed]'}></span>}
    </button>
);

const Taskbar = () => (
    <footer className="flex h-10 shrink-0 items-center bg-[linear-gradient(90deg,#1e1f1d,#22201b_60%,#2a261a_80%,#211f1b)] pl-px font-['Noto_Sans',sans-serif] text-[11px] text-white">
        <Task label="Start">
            <svg width="16" height="16" viewBox="0 0 16 16" fill="#fff"><path d="M0 2.200L7 1.200V7.600H0zM8 1L16 0v7.600H8zM0 8.500h7v6.400L0 13.900zM8 8.500h8V16l-8-1.100z" /></svg>
        </Task>
        <Task label="Chrome" open>
            <svg width="24" height="24" viewBox="0 0 24 24">
                <circle cx="12" cy="12" r="12" fill="#fcc934" />
                <path d="M12 12L1.600 6A12 12 0 0 1 22.400 6z" fill="#e33b2e" /><path d="M1.600 6A12 12 0 0 0 12 24l5.200-9L12 12z" fill="#2fa64f" /><path d="M12 6h10.400A12 12 0 0 1 12 24l5-9z" fill="#fcc934" />
                <circle cx="12" cy="12" r="6" fill="#fff" /><circle cx="12" cy="12" r="4.700" fill="#3a7de8" />
            </svg>
        </Task>
        <Task label="File Explorer" open>
            <svg width="22" height="20" viewBox="0 0 22 20"><path d="M0 1h8l2 2h12v16H0z" fill="#e3aa3d" /><path d="M0 5h22v13H0z" fill="#f8d775" /><path d="M4 19v-8h14v8h-3v-4H7v4z" fill="#4a9fc9" /></svg>
        </Task>
        <Task label="Excel">
            <svg width="24" height="22" viewBox="0 0 24 22"><path d="M6 0h18v22H6z" fill="#1f7c49" /><path d="M15 0h9v7h-9z" fill="#38c481" /><path d="M6 0h9v7H6z" fill="#21a366" /><path d="M15 14h9v8h-9z" fill="#185c37" /><path d="M0 5h13v13H0z" fill="#10733d" /><path d="M3.500 8l6 7.500M9.500 8l-6 7.500" stroke="#fff" strokeWidth="1.800" /></svg>
        </Task>
        <Task label="Notion">
            <svg width="20" height="22" viewBox="0 0 20 22"><path d="M0 2L14 .5 19.500 4.500V21L5 22 0 17z" fill="#111" stroke="#ddd" strokeWidth=".6" /><path d="M5 6l14-1v15.500L5 21.500z" fill="#fff" /><path d="M8.500 19V9L15.500 18V8M7 9h3M14 8h3M7 19h3" stroke="#111" strokeWidth="1.700" fill="none" /></svg>
        </Task>
        <Task label="Notepad++">
            <svg width="22" height="24" viewBox="0 0 22 24"><path d="M0 1h15l4 4v19H0z" fill="#f2f5e6" /><path d="M1 13q8 4 17-2v12H1z" fill="#8cc63f" /><path d="M4 14V8h3l1 5M10 11h3M14 11h3M11.500 9v4" stroke="#333" fill="none" strokeWidth="1.300" /><path d="M19 1l3 2-7 13-2 1v-3z" fill="#d9a13a" /></svg>
        </Task>
        <Task label="Illustrator">
            <svg width="22" height="21" viewBox="0 0 22 21"><rect width="22" height="21" rx="4" fill="#330000" /><text x="4" y="15" fill="#ff9a00" className="font-['Liberation_Sans',sans-serif] text-xs font-bold">Ai</text></svg>
        </Task>
        <Task label="Fusion 360" open current><FusionIcon w="22" h="24" /></Task>
        <Task label="Word">
            <svg width="24" height="22" viewBox="0 0 24 22"><path d="M6 0h18v22H6z" fill="#2b7cd3" /><path d="M6 0h18v6H6z" fill="#41a5ee" /><path d="M6 15h18v7H6z" fill="#103f91" /><path d="M0 5h13v13H0z" fill="#185abd" /><path d="M2 8l2 7 2.500-6L9 15l2-7" stroke="#fff" fill="none" strokeWidth="1.500" /></svg>
        </Task>
        <Task label="Brave" open>
            <svg width="20" height="24" viewBox="0 0 20 24"><path d="M6 0h8l2 2 2 0 2 4-1 3 0 5q-2 6-9 10Q3 20 1 14V9L0 6l2-4h2z" fill="#f4502a" /><path d="M4 5l3 1h6l3-1 1 4-3 4 0 3-4 4-4-4v-3L3 9z" fill="#fff" /><path d="M5 8l4 1.500-1 2zM15 8l-4 1.500 1 2zM8 15l2-1 2 1-2 2z" fill="#f4502a" /></svg>
        </Task>
        <div className="ml-auto flex h-full items-center">
            <button aria-label="Show hidden icons"><svg width="12" height="8" viewBox="0 0 12 8" fill="none" stroke="#fff" strokeWidth="1.400"><path d="M1 7l5-6 5 6" /></svg></button>
            <button aria-label="Network" className="ml-2.5"><svg width="17" height="14" viewBox="0 0 17 14" fill="none" stroke="#fff"><path d="M5 2.500h11v8H3V6M.5.5h4v4h-4zM8.500 10.500v3M5 13.500h8M2.500 4.500v2" /></svg></button>
            <button className="ml-2.5">ENG</button>
            <button className="ml-3 text-center leading-[18px]">09:59 AM<br />04-07-2023</button>
            <button aria-label="Notification center" className="ml-[17px]"><svg width="17" height="16" viewBox="0 0 17 16" fill="none" stroke="#fff" strokeWidth="1.200"><path d="M1 1h15v11.500h-5L8.500 15 6 12.500H1z" /></svg></button>
            <span className="ml-5 mr-1 h-full w-px bg-[#666]"></span>
        </div>
    </footer>
);

export default function App() {
    return (
        <div className="flex h-screen flex-col overflow-hidden bg-white">
            <TitleBar />
            <TabStrip />
            <Ribbon />
            <Canvas />
            <Timeline />
            <Playback />
            <Taskbar />
        </div>
    );
}
